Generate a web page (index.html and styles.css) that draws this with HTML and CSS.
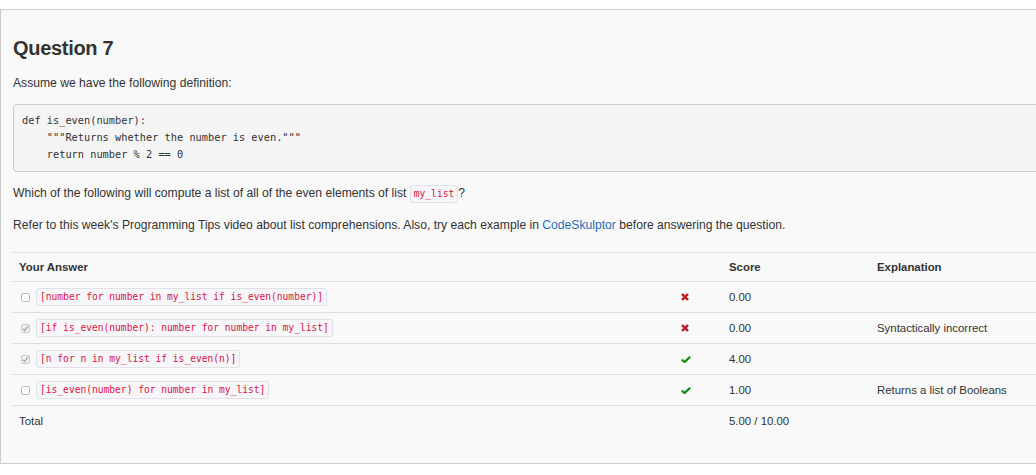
FILE: index.html
```html
<!DOCTYPE html>
<html>
<head>
<meta charset="utf-8">
<link rel="stylesheet" href="styles.css">
</head>
<body>
<div class="panel">
  <h2 class="title">Question 7</h2>
  <p class="para first">Assume we have the following definition:</p>
  <pre class="code-block">def is_even(number):
    """Returns whether the number is even."""
    return number % 2 == 0</pre>
  <p class="para">Which of the following will compute a list of all of the even elements of list <code class="ic">my_list</code>?</p>
  <p class="para">Refer to this week's Programming Tips video about list comprehensions. Also, try each example in <a class="link" href="#">CodeSkulptor</a> before answering the question.</p>
  <table class="results">
    <colgroup>
      <col class="c-answer">
      <col class="c-icon">
      <col class="c-score">
      <col class="c-expl">
    </colgroup>
    <thead>
      <tr class="head-row">
        <th>Your Answer</th>
        <th></th>
        <th>Score</th>
        <th>Explanation</th>
      </tr>
    </thead>
    <tbody>
      <tr>
        <td><span class="answer"><span class="box"></span><code class="ic">[number for number in my_list if is_even(number)]</code></span></td>
        <td class="icon-cell"><svg class="mark" width="8" height="8" viewBox="0 0 8 8"><path d="M1 1 L7 7 M7 1 L1 7" stroke="#c4121b" stroke-width="2.4" stroke-linecap="butt"/></svg></td>
        <td>0.00</td>
        <td></td>
      </tr>
      <tr>
        <td><span class="answer"><span class="box checked"><svg width="7" height="7" viewBox="0 0 7 7"><path d="M1 3.8 L2.8 5.5 L6 1.2" fill="none" stroke="#a8a8a8" stroke-width="1.3"/></svg></span><code class="ic">[if is_even(number): number for number in my_list]</code></span></td>
        <td class="icon-cell"><svg class="mark" width="8" height="8" viewBox="0 0 8 8"><path d="M1 1 L7 7 M7 1 L1 7" stroke="#c4121b" stroke-width="2.4" stroke-linecap="butt"/></svg></td>
        <td>0.00</td>
        <td>Syntactically incorrect</td>
      </tr>
      <tr>
        <td><span class="answer"><span class="box checked"><svg width="7" height="7" viewBox="0 0 7 7"><path d="M1 3.8 L2.8 5.5 L6 1.2" fill="none" stroke="#a8a8a8" stroke-width="1.3"/></svg></span><code class="ic">[n for n in my_list if is_even(n)]</code></span></td>
        <td class="icon-cell"><svg class="mark" width="10" height="7" viewBox="0 0 10 7"><path d="M0.8 3.6 L3.6 6 L9.2 0.8" fill="none" stroke="#118a11" stroke-width="2.2"/></svg></td>
        <td>4.00</td>
        <td></td>
      </tr>
      <tr>
        <td><span class="answer"><span class="box"></span><code class="ic">[is_even(number) for number in my_list]</code></span></td>
        <td class="icon-cell"><svg class="mark" width="10" height="7" viewBox="0 0 10 7"><path d="M0.8 3.6 L3.6 6 L9.2 0.8" fill="none" stroke="#118a11" stroke-width="2.2"/></svg></td>
        <td>1.00</td>
        <td>Returns a list of Booleans</td>
      </tr>
      <tr class="total-row">
        <td>Total</td>
        <td></td>
        <td>5.00 / 10.00</td>
        <td></td>
      </tr>
    </tbody>
  </table>
</div>
</body>
</html>
```
FILE: styles.css
```css
html, body {
  margin: 0;
  padding: 0;
  background: #ffffff;
  overflow: hidden;
}
body {
  font-family: "Liberation Sans", Arial, sans-serif;
  font-size: 12.15px;
  color: #333333;
}
.panel {
  margin-top: 9px;
  width: 1080px;
  background: #f9f9f9;
  border: 1px solid #cccccc;
  border-right: none;
  padding: 27px 0 27px 12px;
}
.title {
  margin: 0 0 14px 0;
  font-size: 20px;
  line-height: 22px;
  font-weight: bold;
  letter-spacing: -0.3px;
  color: #333333;
}
.para {
  margin: 0 0 12px 0;
  line-height: 20px;
}
.para.first {
  margin-bottom: 11px;
}
.code-block {
  margin: 0 0 11px 0;
  padding: 7px 8px 8px 8px;
  background: #f5f5f5;
  border: 1px solid #cccccc;
  border-radius: 4px;
  font-family: "DejaVu Sans Mono", Menlo, monospace;
  font-size: 10.3px;
  line-height: 17px;
  color: #333333;
}
.ic {
  display: inline-block;
  font-family: "DejaVu Sans Mono", Menlo, monospace;
  font-size: 9.6px;
  line-height: 16px;
  color: #dd1144;
  background: #f7f7f9;
  border: 1px solid #e1e1e8;
  border-radius: 3px;
  padding: 0 3px;
  vertical-align: middle;
}
.link {
  color: #1f6dbd;
  text-decoration: none;
}
.results {
  margin-top: 17px;
  width: 1060px;
  border-collapse: collapse;
  table-layout: fixed;
}
.c-answer { width: 657px; }
.c-icon { width: 53px; }
.c-score { width: 148px; }
.results th, .results td {
  text-align: left;
  padding: 0 6px;
  vertical-align: middle;
  border-top: 1px solid #dddddd;
  height: 30px;
}
.results th {
  font-size: 11.4px;
  font-weight: bold;
  height: 28px;
}
.results td {
  font-size: 11.4px;
}
.results td.icon-cell {
  padding-left: 11px;
}
.answer {
  display: flex;
  align-items: center;
  gap: 6px;
  padding-left: 2px;
}
.box {
  display: inline-flex;
  align-items: center;
  justify-content: center;
  width: 7px;
  height: 7px;
  border: 1px solid #bbbbbb;
  border-radius: 2px;
  background: #ffffff;
}
.box.checked {
  background: #f2f2f2;
  border-color: #c8c8c8;
}
.mark {
  display: block;
}
.total-row td {
  height: 30px;
}
```
